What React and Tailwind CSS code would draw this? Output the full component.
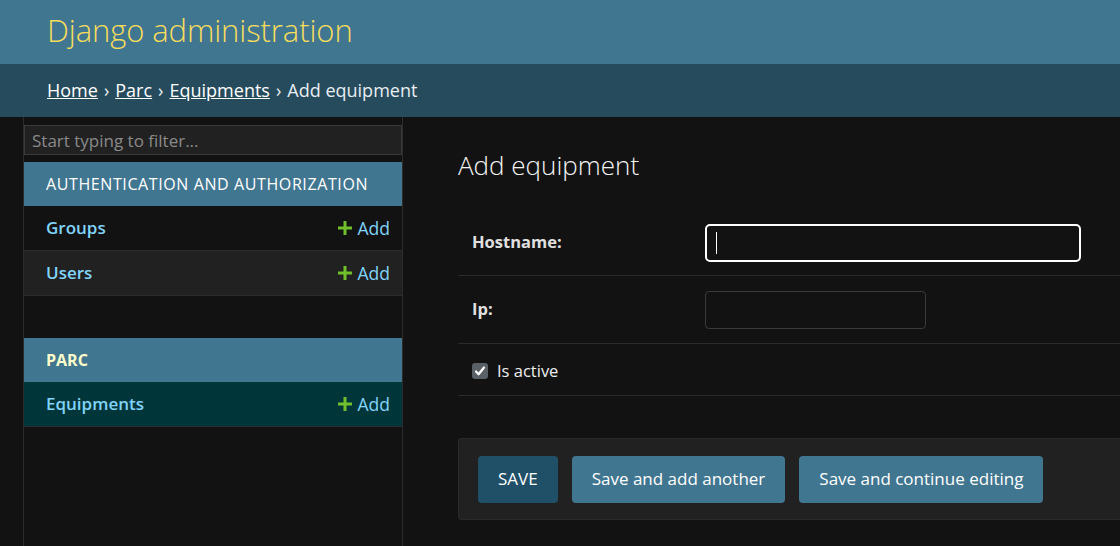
import { useState } from 'react';

const font = { fontFamily: '"Open Sans", "Noto Sans", sans-serif' };

const modules = [
  {
    name: 'Authentication and Authorization',
    current: false,
    models: [
      { name: 'Groups', selected: false },
      { name: 'Users', selected: false },
    ],
  },
  {
    name: 'Parc',
    current: true,
    models: [{ name: 'Equipments', selected: true }],
  },
];

const AddLink = () => (
  <a className="flex items-center gap-[6px] text-[#81d4fa] text-[17.5px]">
    <svg width="14" height="14" viewBox="0 0 14 14">
      <path d="M5.5 0h3v5.5H14v3H8.5V14h-3V8.5H0v-3h5.5z" fill="#70bf2b" />
    </svg>
    Add
  </a>
);

const Sidebar = () => (
  <aside className="w-[380px] shrink-0 border-l border-r border-[#2c2c2c] ml-[23px] pt-[8px]">
    <input
      placeholder="Start typing to filter..."
      className="w-full h-[30px] bg-[#212121] border border-[#3a3a3a] px-[7px] text-[17px] text-[#eee] placeholder:text-[#8a8a8a] outline-none"
      style={font}
    />
    {modules.map((m, i) => (
      <div key={m.name} className={i > 0 ? 'mt-[42px]' : 'mt-[7px]'}>
        <div
          className={`h-[44px] flex items-center px-[22px] bg-[#417690] uppercase text-[16px] ${
            m.current ? 'text-[#ffc] font-bold' : 'text-white tracking-[0.6px]'
          }`}
        >
          {m.name}
        </div>
        {m.models.map((row, j) => (
          <div
            key={row.name}
            className={`h-[45px] flex items-center justify-between pl-[22px] pr-[12px] border-b border-[#2c2c2c] ${
              row.selected ? 'bg-[#00363a]' : j % 2 ? 'bg-[#212121]' : 'bg-[#121212]'
            }`}
          >
            <a className="text-[#81d4fa] text-[17px] font-semibold">{row.name}</a>
            <AddLink />
          </div>
        ))}
      </div>
    ))}
  </aside>
);

const FormRow = ({ label, children, h }) => (
  <div className={`flex border-b border-[#2a2a2a] ${h}`}>
    <label className="w-[247px] shrink-0 pl-[14px] pt-[21px] text-[16.5px] font-bold text-[#e0e0e0]">
      {label}
    </label>
    <div className="pt-[15px]">{children}</div>
  </div>
);

export default function App() {
  const [active, setActive] = useState(true);
  return (
    <div className="w-[1120px] h-[546px] overflow-hidden bg-[#121212] text-[#eee]" style={font}>
      {/* Header */}
      <header className="h-[64px] bg-[#417690] flex items-center pl-[47px]">
        <h1 className="text-[#f5dd5d] text-[31px] font-light tracking-[-0.1px] pb-[4px]">
          Django administration
        </h1>
      </header>

      {/* Breadcrumbs */}
      <div className="h-[53px] bg-[#264b5d] flex items-center pl-[47px] text-[18px] text-[#e8eef2]">
        <a className="underline text-white">Home</a>
        <span className="mx-[6px]">›</span>
        <a className="underline text-white">Parc</a>
        <span className="mx-[6px]">›</span>
        <a className="underline text-white">Equipments</a>
        <span className="mx-[6px]">›</span>
        <span>Add equipment</span>
      </div>

      <div className="flex h-[429px]">
        <Sidebar />

        <main className="flex-1 pl-[55px] pt-[32px]">
          <h2 className="text-[26px] font-light text-[#f5f5f5] leading-[32px]">Add equipment</h2>

          <div className="mt-[28px]">
            <FormRow label="Hostname:" h="h-[67px]">
              <div className="w-[376px] h-[38px] rounded-[5px] border-2 border-white bg-[#121212] flex items-center pl-[9px]">
                <span className="w-px h-[22px] bg-white" />
              </div>
            </FormRow>
            <FormRow label="Ip:" h="h-[68px]">
              <input className="w-[221px] h-[38px] rounded-[4px] border border-[#3a3a3a] bg-[#121212] outline-none" />
            </FormRow>
            <div className="h-[52px] flex items-center pl-[14px] pt-[3px] border-b border-[#2a2a2a]">
              <button
                onClick={() => setActive(!active)}
                className="w-[16px] h-[16px] rounded-[3px] bg-[#5a6166] flex items-center justify-center"
              >
                {active && (
                  <svg width="12" height="12" viewBox="0 0 12 12">
                    <path d="M2 6.5l2.6 2.8L10 2.5" stroke="white" strokeWidth="2.2" fill="none" strokeLinecap="round" strokeLinejoin="round" />
                  </svg>
                )}
              </button>
              <span className="ml-[9px] text-[16.5px] text-[#eee]">Is active</span>
            </div>
          </div>

          <div className="mt-[42px] h-[82px] bg-[#212121] rounded-l-[4px] border border-[#2a2a2a] border-r-0 flex items-center gap-[14px] pl-[19px]">
            <button className="h-[47px] px-[20px] rounded-[4px] bg-[#205067] text-white text-[17px]">
              SAVE
            </button>
            <button className="h-[47px] px-[20px] rounded-[4px] bg-[#417690] text-white text-[17px]">
              Save and add another
            </button>
            <button className="h-[47px] px-[20px] rounded-[4px] bg-[#417690] text-white text-[17px]">
              Save and continue editing
            </button>
          </div>
        </main>
      </div>
    </div>
  );
}
